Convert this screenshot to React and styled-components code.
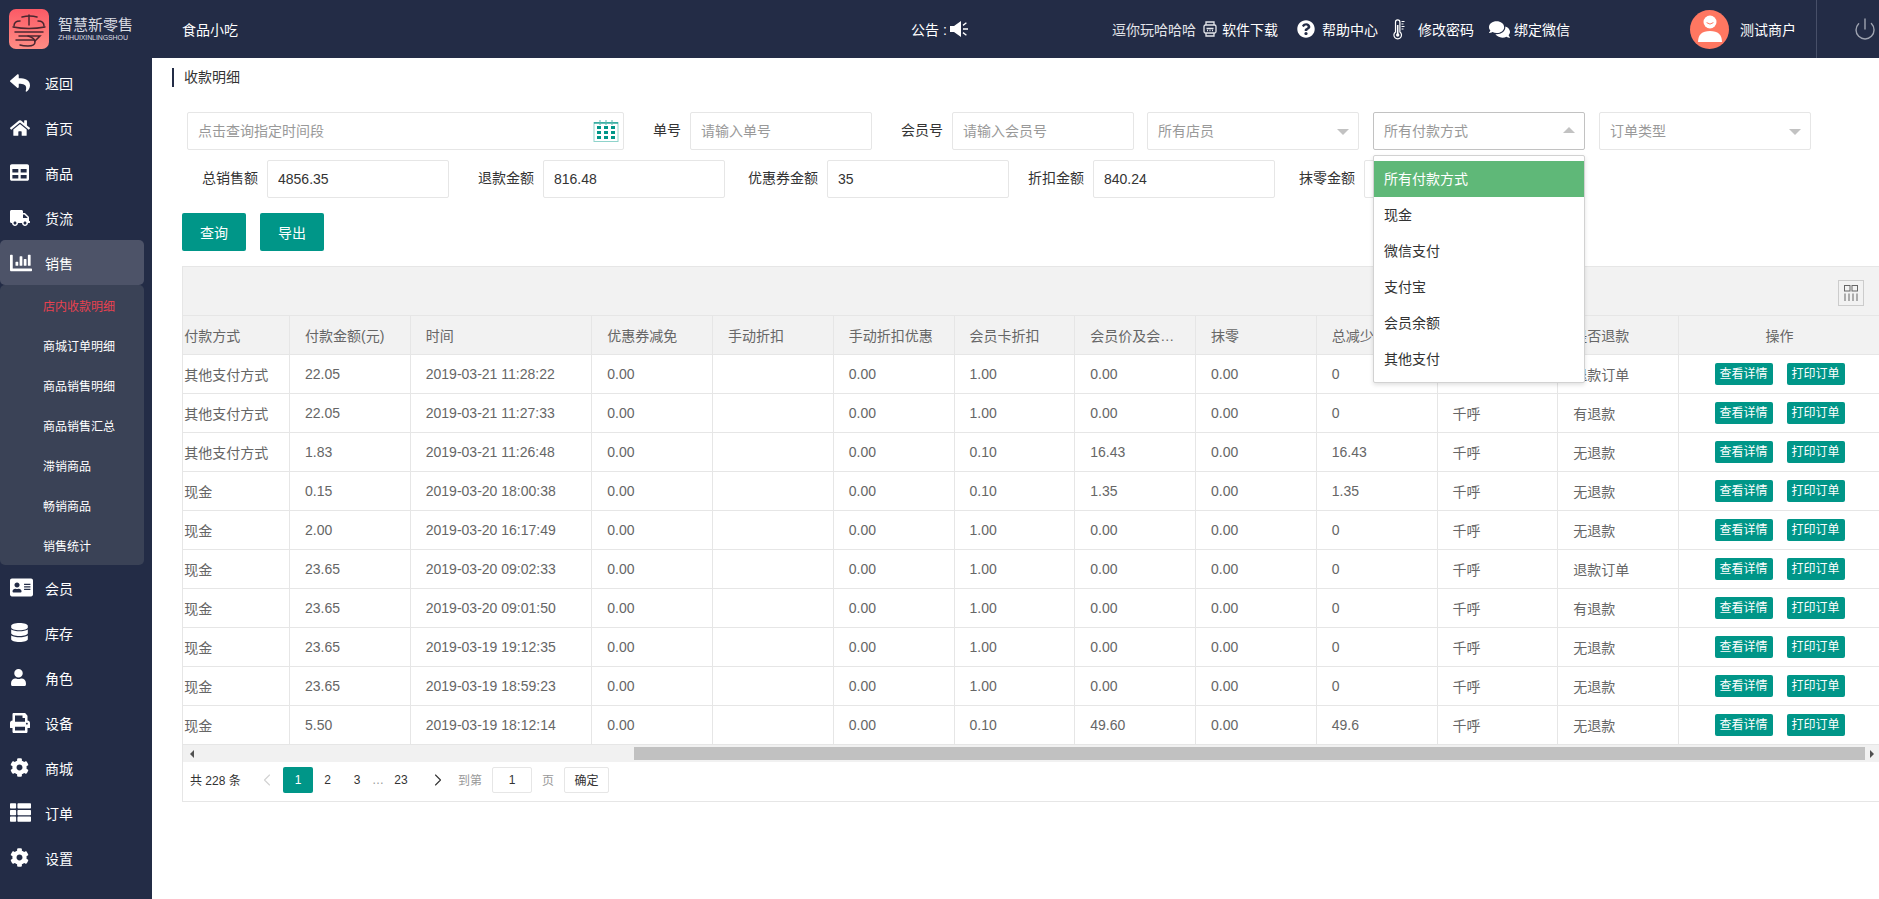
import React from "react";
import styled, { createGlobalStyle } from "styled-components";
import {
  FaReply,
  FaHome,
  FaTable,
  FaTruck,
  FaChartBar,
  FaAddressCard,
  FaDatabase,
  FaUser,
  FaPrint,
  FaCog,
  FaThList,
  FaQuestionCircle,
  FaComments,
} from "react-icons/fa";
import { ChevronLeft, ChevronRight, Power } from "lucide-react";

const GlobalStyle = createGlobalStyle`
  html, body {
    margin: 0;
    height: 100%;
    overflow: hidden;
    background: #fff;
    font-family: "Liberation Sans", "Noto Sans CJK SC", sans-serif;
    font-size: 14px;
    color: #333;
  }
  * { box-sizing: border-box; }
`;

const Page = styled.div`
  width: 1879px;
  height: 899px;
  display: flex;
  flex-direction: column;
  overflow: hidden;
`;

/* top bar */
const Header = styled.header`
  height: 58px;
  flex: none;
  background: #232c46;
  color: #fff;
  display: flex;
  align-items: center;
`;

const LogoBox = styled.div`
  width: 182px;
  flex: none;
  display: flex;
  align-items: center;
  padding-left: 9px;
  gap: 9px;
`;

const LogoText = styled.div`
  display: flex;
  flex-direction: column;
  color: #d9dbe2;
`;

const LogoName = styled.span`
  font-size: 15px;
  line-height: 17px;
  white-space: nowrap;
`;

const LogoSub = styled.span`
  font-size: 7px;
  line-height: 9px;
  white-space: nowrap;
  letter-spacing: -0.1px;
`;

const ShopName = styled.div`
  width: 56px;
  flex: none;
  white-space: nowrap;
`;

const Notice = styled.div`
  margin-left: 673px;
  width: 201px;
  flex: none;
  display: flex;
  align-items: center;
  gap: 3px;
  white-space: nowrap;
`;

const HeaderLinks = styled.div`
  display: flex;
  align-items: center;
  width: 578px;
  flex: none;
  white-space: nowrap;
`;

const LinkText = styled.span`
  margin-left: ${(p) => p.$gap || 0}px;
  color: ${(p) => p.$dim ? "#e3e5ea" : "#fff"};
`;

const LinkIcon = styled.span`
  display: inline-flex;
  margin-left: ${(p) => p.$gap || 0}px;
  color: #fff;
`;

const Avatar = styled.div`
  width: 39px;
  height: 39px;
  flex: none;
  border-radius: 50%;
  background: #ff7761;
  display: flex;
  align-items: center;
  justify-content: center;
`;

const UserName = styled.div`
  margin-left: 11px;
  width: 76px;
  flex: none;
  white-space: nowrap;
`;

const PowerCell = styled.div`
  height: 58px;
  flex: 1;
  border-left: 1px solid #474f68;
  display: flex;
  align-items: center;
  padding-left: 36px;
  color: #9ea3b0;
`;

/* sidebar */
const Body = styled.div`
  flex: 1;
  display: flex;
  min-height: 0;
`;

const Sidebar = styled.nav`
  width: 152px;
  flex: none;
  background: #232c46;
  padding: 2px 8px 0 0;
`;

const NavItem = styled.div`
  height: 45px;
  display: flex;
  align-items: center;
  padding-left: 10px;
  color: #fff;
  border-radius: 5px;
  background: ${(p) => (p.$active ? "#4d5368" : "transparent")};
`;

const NavIcon = styled.span`
  width: 35px;
  flex: none;
  display: inline-flex;
  align-items: center;
`;

const SubMenu = styled.div`
  height: 280px;
  background: #3a4256;
  border-radius: 5px;
  padding-top: 0;
`;

const SubItem = styled.div`
  height: 40px;
  display: flex;
  align-items: center;
  padding-left: 43px;
  font-size: 12px;
  color: ${(p) => (p.$active ? "#e8414f" : "#fff")};
`;

/* main area */
const Main = styled.main`
  flex: 1;
  min-width: 0;
`;

const Crumb = styled.div`
  margin: 10px 0 25px 20px;
  height: 19px;
  line-height: 19px;
  border-left: 2px solid #232c46;
  padding-left: 10px;
`;

const FilterRow = styled.div`
  display: flex;
  padding-left: ${(p) => p.$indent}px;
  margin-bottom: 10px;
`;

const FieldLabel = styled.label`
  width: ${(p) => p.$width}px;
  flex: none;
  height: 38px;
  line-height: 36px;
  text-align: right;
  margin-right: 9px;
  color: #333;
  white-space: nowrap;
`;

const TextInput = styled.input`
  width: ${(p) => p.$width || 182}px;
  height: 38px;
  flex: none;
  padding: 0 10px;
  border: 1px solid #e6e6e6;
  border-radius: 2px;
  font: inherit;
  color: #333;
  background: #fff;
  outline: none;
  &::placeholder { color: #999; opacity: 1; }
`;

const DateField = styled.div`
  position: relative;
  width: 437px;
  flex: none;
`;

const CalendarIcon = styled.svg`
  position: absolute;
  right: 5px;
  top: 8px;
`;

const SelectBox = styled.div`
  position: relative;
  width: 212px;
  height: 38px;
  flex: none;
  margin-left: ${(p) => p.$gap}px;
  padding-left: 10px;
  line-height: 36px;
  color: #999;
  background: #fff;
  border: 1px solid ${(p) => (p.$open ? "#c2c2c2" : "#e6e6e6")};
  border-radius: 2px;
`;

const Caret = styled.i`
  position: absolute;
  right: 9px;
  top: ${(p) => (p.$up ? "14px" : "16px")};
  width: 0;
  height: 0;
  border-left: 6px solid transparent;
  border-right: 6px solid transparent;
  ${(p) =>
    p.$up ? "border-bottom: 6px solid #c2c2c2;" : "border-top: 6px solid #c2c2c2;"}
`;

const Dropdown = styled.ul`
  position: absolute;
  z-index: 5;
  left: -1px;
  top: 42px;
  width: 212px;
  margin: 0;
  padding: 5px 0;
  list-style: none;
  background: #fff;
  border: 1px solid #d2d2d2;
  border-radius: 2px;
  box-shadow: 0 2px 4px rgba(0, 0, 0, 0.12);
`;

const DropdownItem = styled.li`
  height: 36px;
  line-height: 36px;
  padding-left: 10px;
  color: ${(p) => (p.$selected ? "#fff" : "#333")};
  background: ${(p) => (p.$selected ? "#5fb878" : "#fff")};
`;

const ButtonRow = styled.div`
  display: flex;
  gap: 14px;
  padding-left: 30px;
  margin-top: 15px;
`;

const PrimaryButton = styled.button`
  width: 64px;
  height: 38px;
  border: 0;
  border-radius: 2px;
  background: #009688;
  color: #fff;
  font: inherit;
`;

/* table */
const TableBox = styled.div`
  margin: 15px 0 0 30px;
  border-left: 1px solid #e6e6e6;
  overflow: hidden;
`;

const Toolbar = styled.div`
  height: 50px;
  background: #f2f2f2;
  border-top: 1px solid #e6e6e6;
  border-bottom: 1px solid #e6e6e6;
  display: flex;
  justify-content: flex-end;
  padding: 13px 15px 0 0;
`;

const ToolButton = styled.div`
  width: 26px;
  height: 26px;
  border: 1px solid #ccc;
  display: flex;
  align-items: center;
  justify-content: center;
`;

const DataTable = styled.table`
  table-layout: fixed;
  border-collapse: separate;
  border-spacing: 0;
  width: 1711.75px;
  margin-left: -13.75px;
`;

const HeadCell = styled.th`
  height: 39px;
  padding: 0 15px;
  font-weight: normal;
  text-align: ${(p) => (p.$center ? "center" : "left")};
  color: #666;
  background: #f2f2f2;
  border-right: 1px solid #e6e6e6;
  border-bottom: 1px solid #e6e6e6;
  white-space: nowrap;
  overflow: hidden;
  text-overflow: ellipsis;
`;

const Cell = styled.td`
  height: 39px;
  padding: 0 15px;
  color: #666;
  border-right: 1px solid #e6e6e6;
  border-bottom: 1px solid #e6e6e6;
  white-space: nowrap;
  overflow: hidden;
`;

const Actions = styled.div`
  display: flex;
  justify-content: center;
  gap: 14px;
`;

const SmallButton = styled.span`
  display: block;
  width: 58px;
  height: 22px;
  line-height: 22px;
  text-align: center;
  font-size: 12px;
  color: #fff;
  background: #009688;
  border-radius: 2px;
`;

const ScrollBar = styled.div`
  height: 17px;
  background: #f1f1f1;
  display: flex;
  align-items: center;
`;

const ScrollArrow = styled.span`
  width: ${(p) => p.$width}px;
  flex: none;
  display: flex;
  justify-content: center;
  &::before {
    content: "";
    border-top: 4px solid transparent;
    border-bottom: 4px solid transparent;
    ${(p) =>
      p.$right ? "border-left: 4px solid #505050;" : "border-right: 4px solid #505050;"}
  }
`;

const ScrollThumb = styled.span`
  width: 1231px;
  height: 13px;
  margin-left: 434px;
  background: #c1c1c1;
`;

const ScrollRest = styled.span`
  flex: 1;
`;

const Pager = styled.div`
  height: 40px;
  border-bottom: 1px solid #e6e6e6;
  display: flex;
  align-items: center;
  padding: 0 0 4px 7px;
  font-size: 12px;
  color: #333;
`;

const PagerCount = styled.span`
  width: 60px;
  flex: none;
  white-space: nowrap;
`;

const PageLink = styled.span`
  width: ${(p) => p.$width || 30}px;
  height: 26px;
  flex: none;
  display: flex;
  align-items: center;
  justify-content: center;
  border-radius: 2px;
  color: ${(p) => (p.$active ? "#fff" : p.$color || "#333")};
  background: ${(p) => (p.$active ? "#009688" : "transparent")};
`;

const PagerMuted = styled.span`
  color: #999;
  margin-left: ${(p) => p.$gap || 0}px;
  flex: none;
`;

const PagerInput = styled.input`
  width: 40px;
  height: 26px;
  flex: none;
  margin-left: 10px;
  border: 1px solid #e6e6e6;
  border-radius: 2px;
  text-align: center;
  font: inherit;
  color: #333;
  outline: none;
`;

const PagerButton = styled.button`
  width: 45px;
  height: 26px;
  flex: none;
  margin-left: 10px;
  padding: 0;
  border: 1px solid #e6e6e6;
  border-radius: 2px;
  background: #fff;
  font: inherit;
  color: #333;
`;

const LogoMark = () => (
  <svg width="40" height="40" viewBox="0 0 40 40" style={{ flex: "none" }}>
    <defs>
      <linearGradient id="logoBg" x1="0" y1="0" x2="0" y2="1">
        <stop offset="0" stopColor="#fb5a66" />
        <stop offset="1" stopColor="#ff8d85" />
      </linearGradient>
    </defs>
    <rect width="40" height="40" rx="7" fill="url(#logoBg)" />
    <g fill="none" stroke="#4a2730" strokeWidth="1.5" strokeLinecap="round">
      <path d="M13 8q8-2 15 0" />
      <path d="M20 6v10" />
      <path d="M5 17q0-5 6-5M35 17q0-5-6-5" />
      <path d="M4 18q16 3 32 0" />
      <path d="M6 23h28" />
      <path d="M10 27h21l-5 5" />
      <path d="M19 27q7 2 7 6t-7 4q-5 0-8-1" />
      <path d="M7 31h18" />
    </g>
  </svg>
);

const SpeakerIcon = () => (
  <svg width="19" height="16" viewBox="0 0 19 16" fill="#fff">
    <path d="M0 5h4l7-5v16l-7-5H0z" />
    <path d="M13 7.3h5v1.4h-5zM12.6 3.8l3.4-2.6.8 1-3.4 2.7zM12.6 12.2l3.4 2.6.8-1-3.4-2.7z" />
  </svg>
);

const WatchIcon = () => (
  <svg width="14" height="16" viewBox="0 0 14 16" fill="none" stroke="#e3e5ea" strokeWidth="1.3">
    <path d="M3 4V1h8v3M3 12v3h8v-3" />
    <rect x="1" y="4" width="12" height="8" rx="1.5" />
    <path d="M3.5 7.5h7M4 9.5h1M6.5 9.5h1M9 9.5h1" />
  </svg>
);

const ThermometerIcon = () => (
  <svg width="13" height="21" viewBox="0 0 13 21" fill="none" stroke="#fff" strokeWidth="1.2">
    <path d="M2.5 13V3a2.2 2.2 0 0 1 4.4 0v10a3.8 3.8 0 1 1-4.4 0z" />
    <circle cx="4.7" cy="16" r="1.7" fill="#fff" stroke="none" />
    <path d="M4.7 15V6" strokeWidth="1.6" />
    <path d="M8.5 2.5h3M8.5 5h2M8.5 7.5h3M8.5 10h2" />
  </svg>
);

const PersonIcon = () => (
  <svg width="24" height="28" viewBox="0 0 24 28" fill="#fff">
    <circle cx="12" cy="7" r="6.5" />
    <path d="M8.6 7.6q3.4 3 6.8 0" fill="none" stroke="#ff7761" strokeWidth="1" />
    <path d="M0 27q0-11 12-11t12 11z" />
  </svg>
);

const CalendarGlyph = () => (
  <CalendarIcon width="26" height="22" viewBox="0 0 26 22">
    <rect x="1" y="2.5" width="24" height="19" fill="#fff" stroke="#8fd3cb" strokeWidth="1" />
    <path d="M1 3h24" stroke="#009688" strokeWidth="1.2" />
    <path d="M7 0v5M13 0v5M19 0v5" stroke="#5bb8ae" strokeWidth="1" />
    {[6, 11, 16].map((y) =>
      [4, 11, 18].map((x) => (
        <rect key={`${x}-${y}`} x={x} y={y} width="4" height="3" fill="#009688" />
      ))
    )}
  </CalendarIcon>
);

const ColumnsGlyph = () => (
  <svg width="14" height="16" viewBox="0 0 14 16" fill="none" stroke="#666" strokeWidth="1">
    <rect x="0.5" y="0.5" width="5.5" height="5.5" />
    <rect x="8" y="0.5" width="5.5" height="5.5" />
    <path d="M1 8.5V16M5 8.5V16M9 8.5V16M13 8.5V16" />
  </svg>
);

const NAV_TOP = [
  { label: "返回", Icon: FaReply, size: 20 },
  { label: "首页", Icon: FaHome, size: 20 },
  { label: "商品", Icon: FaTable, size: 19 },
  { label: "货流", Icon: FaTruck, size: 20 },
];

const NAV_BOTTOM = [
  { label: "会员", Icon: FaAddressCard, size: 23 },
  { label: "库存", Icon: FaDatabase, size: 19 },
  { label: "角色", Icon: FaUser, size: 17 },
  { label: "设备", Icon: FaPrint, size: 20 },
  { label: "商城", Icon: FaCog, size: 19 },
  { label: "订单", Icon: FaThList, size: 21 },
  { label: "设置", Icon: FaCog, size: 19 },
];

const SUB_NAV = [
  "店内收款明细",
  "商城订单明细",
  "商品销售明细",
  "商品销售汇总",
  "滞销商品",
  "畅销商品",
  "销售统计",
];

const PAY_OPTIONS = ["所有付款方式", "现金", "微信支付", "支付宝", "会员余额", "其他支付"];

const COLUMNS = [
  { title: "付款方式", width: 120.75 },
  { title: "付款金额(元)", width: 120.75 },
  { title: "时间", width: 181.5 },
  { title: "优惠券减免", width: 120.75 },
  { title: "手动折扣", width: 120.75 },
  { title: "手动折扣优惠", width: 120.75 },
  { title: "会员卡折扣", width: 120.75 },
  { title: "会员价及会员折扣", width: 120.75 },
  { title: "抹零", width: 120.75 },
  { title: "总减少金额", width: 120.75 },
  { title: "收银员", width: 120.75 },
  { title: "是否退款", width: 120.75 },
  { title: "操作", width: 202, center: true },
];

const ROWS = [
  ["其他支付方式", "22.05", "2019-03-21 11:28:22", "1.00", "0.00", "0", "退款订单"],
  ["其他支付方式", "22.05", "2019-03-21 11:27:33", "1.00", "0.00", "0", "有退款"],
  ["其他支付方式", "1.83", "2019-03-21 11:26:48", "0.10", "16.43", "16.43", "无退款"],
  ["现金", "0.15", "2019-03-20 18:00:38", "0.10", "1.35", "1.35", "无退款"],
  ["现金", "2.00", "2019-03-20 16:17:49", "1.00", "0.00", "0", "无退款"],
  ["现金", "23.65", "2019-03-20 09:02:33", "1.00", "0.00", "0", "退款订单"],
  ["现金", "23.65", "2019-03-20 09:01:50", "1.00", "0.00", "0", "有退款"],
  ["现金", "23.65", "2019-03-19 19:12:35", "1.00", "0.00", "0", "无退款"],
  ["现金", "23.65", "2019-03-19 18:59:23", "1.00", "0.00", "0", "无退款"],
  ["现金", "5.50", "2019-03-19 18:12:14", "0.10", "49.60", "49.6", "无退款"],
];

const NavRow = ({ label, Icon, size, active }) => (
  <NavItem $active={active}>
    <NavIcon>
      <Icon size={size} />
    </NavIcon>
    {label}
  </NavItem>
);

export default function App() {
  return (
    <Page>
      <GlobalStyle />
      <Header>
        <LogoBox>
          <LogoMark />
          <LogoText>
            <LogoName>智慧新零售</LogoName>
            <LogoSub>ZHIHUIXINLINGSHOU</LogoSub>
          </LogoText>
        </LogoBox>
        <ShopName>食品小吃</ShopName>
        <Notice>
          公告 :
          <SpeakerIcon />
        </Notice>
        <HeaderLinks>
          <LinkText $dim>逗你玩哈哈哈</LinkText>
          <LinkIcon $gap={7}>
            <WatchIcon />
          </LinkIcon>
          <LinkText $gap={5}>软件下载</LinkText>
          <LinkIcon $gap={19}>
            <FaQuestionCircle size={18} />
          </LinkIcon>
          <LinkText $gap={7}>帮助中心</LinkText>
          <LinkIcon $gap={15}>
            <ThermometerIcon />
          </LinkIcon>
          <LinkText $gap={12}>修改密码</LinkText>
          <LinkIcon $gap={15}>
            <FaComments size={21} />
          </LinkIcon>
          <LinkText $gap={4}>绑定微信</LinkText>
        </HeaderLinks>
        <Avatar>
          <PersonIcon />
        </Avatar>
        <UserName>测试商户</UserName>
        <PowerCell>
          <Power size={24} strokeWidth={1.4} />
        </PowerCell>
      </Header>
      <Body>
        <Sidebar>
          {NAV_TOP.map((item) => (
            <NavRow key={item.label} {...item} />
          ))}
          <NavRow label="销售" Icon={FaChartBar} size={22} active />
          <SubMenu>
            {SUB_NAV.map((name, i) => (
              <SubItem key={name} $active={i === 0}>
                {name}
              </SubItem>
            ))}
          </SubMenu>
          {NAV_BOTTOM.map((item) => (
            <NavRow key={item.label} {...item} />
          ))}
        </Sidebar>
        <Main>
          <Crumb>收款明细</Crumb>
          <FilterRow $indent={35}>
            <DateField>
              <TextInput $width={437} placeholder="点击查询指定时间段" readOnly />
              <CalendarGlyph />
            </DateField>
            <FieldLabel $width={57}>单号</FieldLabel>
            <TextInput placeholder="请输入单号" readOnly />
            <FieldLabel $width={71}>会员号</FieldLabel>
            <TextInput placeholder="请输入会员号" readOnly />
            <SelectBox $gap={13}>
              所有店员
              <Caret />
            </SelectBox>
            <SelectBox $gap={14} $open>
              所有付款方式
              <Caret $up />
              <Dropdown>
                {PAY_OPTIONS.map((name, i) => (
                  <DropdownItem key={name} $selected={i === 0}>
                    {name}
                  </DropdownItem>
                ))}
              </Dropdown>
            </SelectBox>
            <SelectBox $gap={14}>
              订单类型
              <Caret />
            </SelectBox>
          </FilterRow>
          <FilterRow $indent={30}>
            <FieldLabel $width={76}>总销售额</FieldLabel>
            <TextInput defaultValue="4856.35" readOnly />
            <FieldLabel $width={85}>退款金额</FieldLabel>
            <TextInput defaultValue="816.48" readOnly />
            <FieldLabel $width={93}>优惠券金额</FieldLabel>
            <TextInput defaultValue="35" readOnly />
            <FieldLabel $width={75}>折扣金额</FieldLabel>
            <TextInput defaultValue="840.24" readOnly />
            <FieldLabel $width={80}>抹零金额</FieldLabel>
            <TextInput readOnly />
          </FilterRow>
          <ButtonRow>
            <PrimaryButton>查询</PrimaryButton>
            <PrimaryButton>导出</PrimaryButton>
          </ButtonRow>
          <TableBox>
            <Toolbar>
              <ToolButton>
                <ColumnsGlyph />
              </ToolButton>
            </Toolbar>
            <DataTable>
              <colgroup>
                {COLUMNS.map((col) => (
                  <col key={col.title} width={col.width} />
                ))}
              </colgroup>
              <thead>
                <tr>
                  {COLUMNS.map((col) => (
                    <HeadCell key={col.title} $center={col.center}>
                      {col.title}
                    </HeadCell>
                  ))}
                </tr>
              </thead>
              <tbody>
                {ROWS.map(([pay, amount, time, card, member, total, refund]) => (
                  <tr key={time}>
                    <Cell>{pay}</Cell>
                    <Cell>{amount}</Cell>
                    <Cell>{time}</Cell>
                    <Cell>0.00</Cell>
                    <Cell />
                    <Cell>0.00</Cell>
                    <Cell>{card}</Cell>
                    <Cell>{member}</Cell>
                    <Cell>0.00</Cell>
                    <Cell>{total}</Cell>
                    <Cell>千呼</Cell>
                    <Cell>{refund}</Cell>
                    <Cell>
                      <Actions>
                        <SmallButton>查看详情</SmallButton>
                        <SmallButton>打印订单</SmallButton>
                      </Actions>
                    </Cell>
                  </tr>
                ))}
              </tbody>
            </DataTable>
            <ScrollBar>
              <ScrollArrow $width={17} />
              <ScrollThumb />
              <ScrollRest />
              <ScrollArrow $width={14} $right />
            </ScrollBar>
            <Pager>
              <PagerCount>共 228 条</PagerCount>
              <PageLink $width={33} $color="#d2d2d2">
                <ChevronLeft size={20} strokeWidth={1.3} />
              </PageLink>
              <PageLink $active>1</PageLink>
              <PageLink $width={29}>2</PageLink>
              <PageLink>3</PageLink>
              <PageLink $width={12} $color="#999">…</PageLink>
              <PageLink $width={34}>23</PageLink>
              <PageLink $width={40}>
                <ChevronRight size={20} strokeWidth={1.3} />
              </PageLink>
              <PagerMuted>到第</PagerMuted>
              <PagerInput defaultValue="1" readOnly />
              <PagerMuted $gap={10}>页</PagerMuted>
              <PagerButton>确定</PagerButton>
            </Pager>
          </TableBox>
        </Main>
      </Body>
    </Page>
  );
}
